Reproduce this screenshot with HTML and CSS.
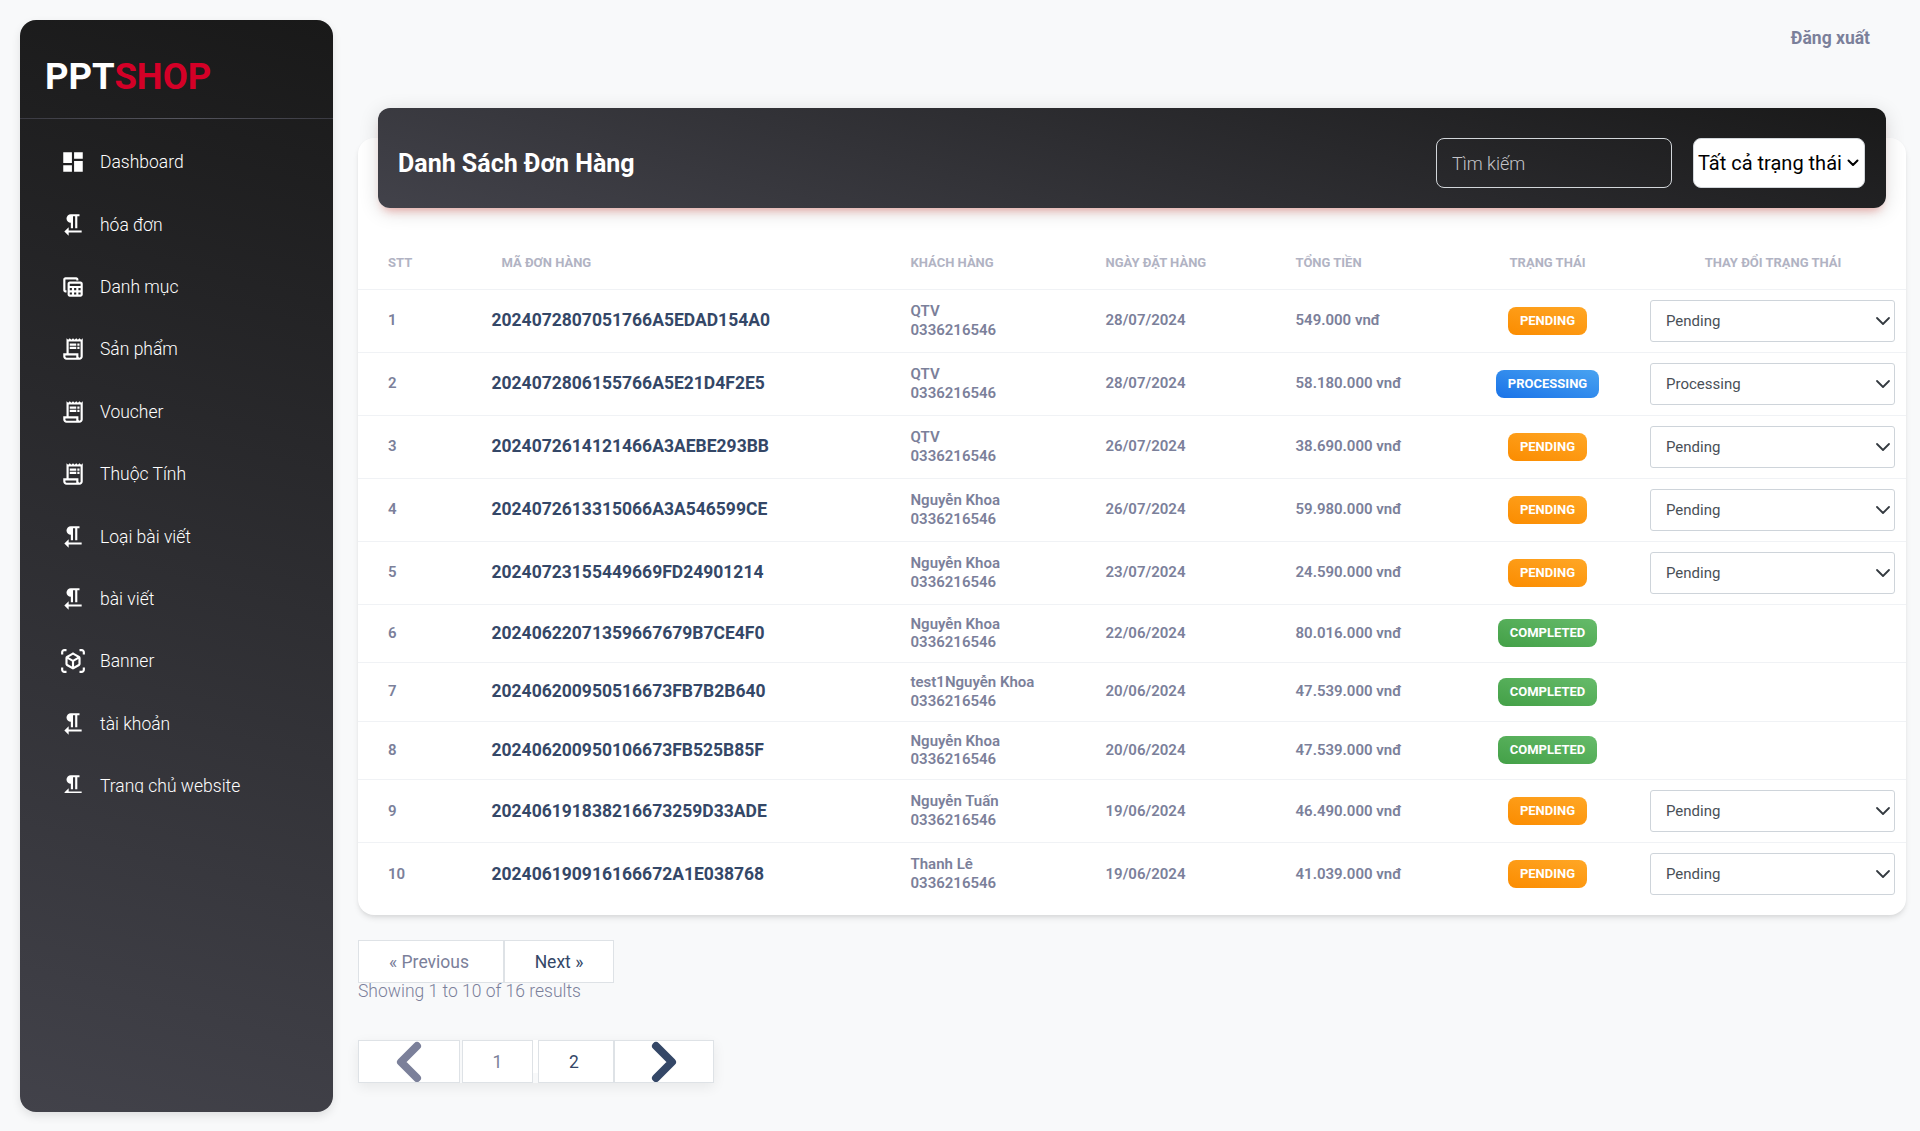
FILE: index.html
```html
<!DOCTYPE html>
<html lang="vi">
<head>
  <meta charset="UTF-8" />
  <title>Danh Sách Đơn Hàng</title>
  <link rel="stylesheet" href="styles.css">
</head>
<body>

  <svg class="icon-defs" width="0" height="0">
    <symbol id="i-dashboard" viewBox="0 0 24 24"><path d="M3 13h8V3H3v10zm0 8h8v-6H3v6zm10 0h8V11h-8v10zm0-18v6h8V3h-8z"/></symbol>
    <symbol id="i-rtl" viewBox="0 0 24 24"><path d="M10 10v5h2V4h2v11h2V4h2V2h-8C7.79 2 6 3.79 6 6s1.79 4 4 4zm-2 7v-3l-4 4 4 4v-3h12v-2H8z"/></symbol>
    <symbol id="i-table" viewBox="0 0 24 24"><path d="M19 7H9c-1.1 0-2 .9-2 2v10c0 1.1.9 2 2 2h10c1.1 0 2-.9 2-2V9c0-1.1-.9-2-2-2zm0 2v2H9V9h10zm-6 6v-2h2v2h-2zm2 2v2h-2v-2h2zm-4-2H9v-2h2v2zm6-2h2v2h-2v-2zm-8 4h2v2H9v-2zm8 2v-2h2v2h-2zM6 17H5c-1.1 0-2-.9-2-2V5c0-1.1.9-2 2-2h10c1.1 0 2 .9 2 2v1h-2V5H5v10h1v2z"/></symbol>
    <symbol id="i-receipt" viewBox="0 0 24 24"><path d="M19.5 3.5 18 2l-1.5 1.5L15 2l-1.5 1.5L12 2l-1.5 1.5L9 2 7.5 3.5 6 2v14H3v3c0 1.66 1.34 3 3 3h12c1.66 0 3-1.34 3-3V2l-1.5 1.5zM15 20H6c-.55 0-1-.45-1-1v-1h10v2zm4-1c0 .55-.45 1-1 1s-1-.45-1-1v-3H8V5h11v14z"/><path d="M9 7h6v2H9zm7 0h2v2h-2zM9 10h6v2H9zm7 0h2v2h-2z"/></symbol>
    <symbol id="i-ar" viewBox="0 0 24 24"><path d="M3 4c0-.55.45-1 1-1h2V1H4C2.34 1 1 2.34 1 4v2h2V4zm0 16v-2H1v2c0 1.66 1.34 3 3 3h2v-2H4c-.55 0-1-.45-1-1zM20 1h-2v2h2c.55 0 1 .45 1 1v2h2V4c0-1.66-1.34-3-3-3zm1 19c0 .55-.45 1-1 1h-2v2h2c1.66 0 3-1.34 3-3v-2h-2v2zm-2-5.13V9.13c0-.72-.38-1.38-1-1.73l-5-2.88c-.31-.18-.65-.27-1-.27s-.69.09-1 .27L6 7.39c-.62.36-1 1.02-1 1.74v5.74c0 .72.38 1.38 1 1.73l5 2.88c.31.18.65.27 1 .27s.69-.09 1-.27l5-2.88c.62-.35 1-1.01 1-1.73zm-8 2.3-4-2.3v-4.63l4 2.33v4.6zm1-6.33L8.04 8.53 12 6.25l3.96 2.28L12 10.84zm5 4.03-4 2.3v-4.6l4-2.33v4.63z"/></symbol>
  </svg>

  <aside class="sidebar">
    <a class="logo" href="#">PPT<span>SHOP</span></a>
    <hr class="divider">
    <nav class="menu">
      <a href="#"><svg><use href="#i-dashboard"/></svg>Dashboard</a>
      <a href="#"><svg><use href="#i-rtl"/></svg>hóa đơn</a>
      <a href="#"><svg><use href="#i-table"/></svg>Danh mục</a>
      <a href="#"><svg><use href="#i-receipt"/></svg>Sản phẩm</a>
      <a href="#"><svg><use href="#i-receipt"/></svg>Voucher</a>
      <a href="#"><svg><use href="#i-receipt"/></svg>Thuộc Tính</a>
      <a href="#"><svg><use href="#i-rtl"/></svg>Loại bài viết</a>
      <a href="#"><svg><use href="#i-rtl"/></svg>bài viết</a>
      <a href="#"><svg><use href="#i-ar"/></svg>Banner</a>
      <a href="#"><svg><use href="#i-rtl"/></svg>tài khoản</a>
      <a href="#"><svg><use href="#i-rtl"/></svg>Trang chủ website</a>
    </nav>
  </aside>

  <main class="main">
    <div class="topbar"><a class="logout" href="#">Đăng xuất</a></div>

    <section class="card">
      <div class="card-header">
        <h2>Danh Sách Đơn Hàng</h2>
        <input class="search" type="text" placeholder="Tìm kiếm">
        <select class="status-filter">
          <option>Tất cả trạng thái</option>
        </select>
      </div>

      <table class="orders">
        <colgroup>
          <col class="c-stt"><col class="c-code"><col class="c-customer"><col class="c-date"><col class="c-total"><col class="c-status"><col class="c-change">
        </colgroup>
        <thead>
          <tr>
            <th class="stt">STT</th>
            <th class="code-head">Mã đơn hàng</th>
            <th>Khách hàng</th>
            <th>Ngày đặt hàng</th>
            <th>Tổng tiền</th>
            <th class="center">Trạng thái</th>
            <th class="center">Thay đổi trạng thái</th>
          </tr>
        </thead>
        <tbody>
          <tr>
            <td class="stt">1</td>
            <td class="code">2024072807051766A5EDAD154A0</td>
            <td>QTV<br>0336216546</td>
            <td>28/07/2024</td>
            <td>549.000 vnđ</td>
            <td class="center"><span class="badge pending">Pending</span></td>
            <td><select class="change"><option>Pending</option></select></td>
          </tr>
          <tr>
            <td class="stt">2</td>
            <td class="code">2024072806155766A5E21D4F2E5</td>
            <td>QTV<br>0336216546</td>
            <td>28/07/2024</td>
            <td>58.180.000 vnđ</td>
            <td class="center"><span class="badge processing">Processing</span></td>
            <td><select class="change"><option>Processing</option></select></td>
          </tr>
          <tr>
            <td class="stt">3</td>
            <td class="code">2024072614121466A3AEBE293BB</td>
            <td>QTV<br>0336216546</td>
            <td>26/07/2024</td>
            <td>38.690.000 vnđ</td>
            <td class="center"><span class="badge pending">Pending</span></td>
            <td><select class="change"><option>Pending</option></select></td>
          </tr>
          <tr>
            <td class="stt">4</td>
            <td class="code">2024072613315066A3A546599CE</td>
            <td>Nguyễn Khoa<br>0336216546</td>
            <td>26/07/2024</td>
            <td>59.980.000 vnđ</td>
            <td class="center"><span class="badge pending">Pending</span></td>
            <td><select class="change"><option>Pending</option></select></td>
          </tr>
          <tr>
            <td class="stt">5</td>
            <td class="code">20240723155449669FD24901214</td>
            <td>Nguyễn Khoa<br>0336216546</td>
            <td>23/07/2024</td>
            <td>24.590.000 vnđ</td>
            <td class="center"><span class="badge pending">Pending</span></td>
            <td><select class="change"><option>Pending</option></select></td>
          </tr>
          <tr>
            <td class="stt">6</td>
            <td class="code">20240622071359667679B7CE4F0</td>
            <td>Nguyễn Khoa<br>0336216546</td>
            <td>22/06/2024</td>
            <td>80.016.000 vnđ</td>
            <td class="center"><span class="badge completed">Completed</span></td>
            <td></td>
          </tr>
          <tr>
            <td class="stt">7</td>
            <td class="code">202406200950516673FB7B2B640</td>
            <td>test1Nguyễn Khoa<br>0336216546</td>
            <td>20/06/2024</td>
            <td>47.539.000 vnđ</td>
            <td class="center"><span class="badge completed">Completed</span></td>
            <td></td>
          </tr>
          <tr>
            <td class="stt">8</td>
            <td class="code">202406200950106673FB525B85F</td>
            <td>Nguyễn Khoa<br>0336216546</td>
            <td>20/06/2024</td>
            <td>47.539.000 vnđ</td>
            <td class="center"><span class="badge completed">Completed</span></td>
            <td></td>
          </tr>
          <tr>
            <td class="stt">9</td>
            <td class="code">202406191838216673259D33ADE</td>
            <td>Nguyễn Tuấn<br>0336216546</td>
            <td>19/06/2024</td>
            <td>46.490.000 vnđ</td>
            <td class="center"><span class="badge pending">Pending</span></td>
            <td><select class="change"><option>Pending</option></select></td>
          </tr>
          <tr>
            <td class="stt">10</td>
            <td class="code">202406190916166672A1E038768</td>
            <td>Thanh Lê<br>0336216546</td>
            <td>19/06/2024</td>
            <td>41.039.000 vnđ</td>
            <td class="center"><span class="badge pending">Pending</span></td>
            <td><select class="change"><option>Pending</option></select></td>
          </tr>
        </tbody>
      </table>
    </section>

    <div class="simple-links">
      <a class="muted" href="#">&laquo; Previous</a>
      <a href="#">Next &raquo;</a>
    </div>
    <p class="showing">Showing 1 to 10 of 16 results</p>

    <div class="pager">
      <a class="page arrow prev muted" href="#">
        <svg width="28" height="44" viewBox="0 0 28 44"><path d="M22 6 6 22l16 16"/></svg>
      </a>
      <a class="page num first muted" href="#">1</a>
      <span class="page-gap"></span>
      <a class="page num second" href="#">2</a>
      <a class="page arrow" href="#">
        <svg width="28" height="44" viewBox="0 0 28 44"><path d="m6 6 16 16L6 38"/></svg>
      </a>
    </div>
  </main>

</body>
</html>
```

FILE: styles.css
```css
:root {
  --text-dark: #344767;
  --text-muted: #7b809a;
  --border: #dee2e6;
}

* {
  box-sizing: border-box;
}

body {
  margin: 0;
  min-height: 1131px;
  display: flex;
  align-items: flex-start;
  background-color: #f8f9fa;
  font-family: Roboto, sans-serif;
  color: var(--text-muted);
}

a {
  text-decoration: none;
  color: inherit;
}

.icon-defs {
  position: absolute;
}

/* sidebar */
.sidebar {
  flex: none;
  width: 313px;
  height: 1092px;
  margin: 20px 25px 0 20px;
  border-radius: 16px;
  background-image: linear-gradient(195deg, #191919, #42424a);
  box-shadow: 0 4px 10px rgba(0, 0, 0, 0.1);
  color: #fff;
}

.logo {
  display: block;
  height: 98px;
  padding: 35px 0 0 25px;
  font-size: 36.5px;
  line-height: 44px;
  font-weight: 700;
}

.logo span {
  color: #d40027;
}

.divider {
  height: 1px;
  margin: 0;
  border: 0;
  background-image: linear-gradient(90deg, #3a3a42, #55555e 50%, #3a3a42);
}

.menu {
  height: 662px;
  margin-top: 12px;
  overflow: hidden;
}

.menu a {
  display: flex;
  align-items: center;
  gap: 14px;
  height: 62.4px;
  padding-left: 40px;
  font-size: 17.5px;
  font-weight: 300;
}

.menu svg {
  flex: none;
  width: 26px;
  height: 26px;
  fill: #fff;
}

/* main column */
.main {
  width: 1548px;
}

.topbar {
  display: flex;
  justify-content: flex-end;
  height: 138px;
  padding: 27px 36px 0 0;
}

.logout {
  font-size: 17.5px;
  line-height: 22px;
  font-weight: 700;
}

.card {
  display: flow-root;
  padding-bottom: 10px;
  border-radius: 16px;
  background-color: #fff;
  box-shadow: 0 4px 6px -1px rgba(0, 0, 0, 0.1), 0 2px 4px -1px rgba(0, 0, 0, 0.06);
}

.card-header {
  display: flex;
  align-items: center;
  height: 100px;
  margin: -30px 20px 0;
  padding: 10px 21px 0 20px;
  border-radius: 12px;
  background-image: linear-gradient(195deg, #191919, #42424a);
  box-shadow: 0 4px 20px rgba(0, 0, 0, 0.14), 0 7px 10px -5px rgba(244, 67, 54, 0.4);
}

.card-header h2 {
  flex: 1;
  margin: 0;
  font-size: 25px;
  font-weight: 700;
  color: #fff;
}

.search {
  width: 236px;
  height: 50px;
  margin-right: 21px;
  padding: 0 15px;
  border: 1px solid #d2d6da;
  border-radius: 8px;
  background: transparent;
  font-family: Roboto, sans-serif;
  font-size: 18px;
  font-weight: 300;
  color: #fff;
}

.search::placeholder {
  color: #c4c4c8;
}

.status-filter {
  width: 172px;
  height: 50px;
  padding: 0 0 0 4px;
  border: 1px solid #d2d6da;
  border-radius: 8px;
  appearance: none;
  background: #fff url("data:image/svg+xml,%3csvg xmlns='http://www.w3.org/2000/svg' viewBox='0 0 12 8'%3e%3cpath fill='none' stroke='%23000' stroke-linecap='round' stroke-linejoin='round' stroke-width='2' d='m1.5 1.5 4.5 4.5 4.5-4.5'/%3e%3c/svg%3e") no-repeat right 5px center / 12px 8px;
  font-family: Roboto, sans-serif;
  font-size: 20px;
  color: #000;
}

/* orders table */
.orders {
  width: 100%;
  margin-top: 30px;
  border-collapse: collapse;
  table-layout: fixed;
}

.c-stt { width: 123.5px; }
.c-code { width: 419px; }
.c-customer { width: 195px; }
.c-date { width: 190px; }
.c-total { width: 169.5px; }
.c-status { width: 185px; }
.c-change { width: 266px; }

.orders th {
  height: 51px;
  padding: 0 10px 2px;
  text-align: left;
  font-size: 13px;
  font-weight: 700;
  text-transform: uppercase;
  color: #b1b3c3;
  border-bottom: 1px solid #f0f2f5;
}

.orders td {
  padding: 10px;
  font-size: 15px;
  line-height: 18.8px;
  font-weight: 600;
  border-bottom: 1px solid #f0f2f5;
}

.orders tbody tr:last-child td {
  border-bottom: 0;
}

.orders .stt {
  padding-left: 30px;
}

.orders .code-head {
  padding-left: 20px;
}

.orders .code {
  font-size: 17.5px;
  font-weight: 700;
  color: var(--text-dark);
}

.orders .center {
  text-align: center;
}

.badge {
  display: inline-block;
  padding: 5px 12px;
  border-radius: 8px;
  font-size: 13px;
  line-height: 18px;
  font-weight: 700;
  text-transform: uppercase;
  color: #fff;
  vertical-align: middle;
}

.pending { background-image: linear-gradient(195deg, #ffa726, #fb8c00); }
.processing { background-image: linear-gradient(195deg, #49a3f1, #1a73e8); }
.completed { background-image: linear-gradient(195deg, #66bb6a, #43a047); }

.change {
  display: block;
  width: 245px;
  height: 42px;
  padding: 0 32px 0 15px;
  border: 1px solid #ced4da;
  border-radius: 3px;
  appearance: none;
  background: #fff url("data:image/svg+xml,%3csvg xmlns='http://www.w3.org/2000/svg' viewBox='0 0 16 16'%3e%3cpath fill='none' stroke='%23343a40' stroke-linecap='round' stroke-linejoin='round' stroke-width='1.8' d='m2 5 6 6 6-6'/%3e%3c/svg%3e") no-repeat right 3px center / 16px 16px;
  font-family: Roboto, sans-serif;
  font-size: 15px;
  color: #495057;
}

/* pagination */
.simple-links {
  display: flex;
  margin-top: 25px;
}

.simple-links a {
  display: flex;
  align-items: center;
  justify-content: center;
  height: 43px;
  border: 1px solid var(--border);
  background-color: #fff;
  font-size: 17.5px;
  color: var(--text-dark);
}

.simple-links a:first-child {
  width: 146px;
  padding-right: 4px;
}

.simple-links a:last-child {
  width: 110px;
}

.simple-links a.muted {
  color: var(--text-muted);
}

.showing {
  margin: -4px 0 0;
  font-size: 17.5px;
  line-height: 24px;
  font-weight: 300;
}

.pager {
  display: flex;
  align-items: flex-start;
  margin-top: 37px;
  width: max-content;
  box-shadow: 0 4px 12px rgba(0, 0, 0, 0.07);
}

.page {
  display: flex;
  align-items: center;
  justify-content: center;
  height: 43px;
  border: 1px solid var(--border);
  background-color: #fff;
  font-size: 17.5px;
  color: var(--text-dark);
}

.page.muted {
  color: var(--text-muted);
}

.page.arrow {
  width: 100px;
  overflow: hidden;
}

.page.prev {
  width: 102px;
}

.page.first {
  width: 71px;
  margin-left: 2px;
}

.page.second {
  width: 76px;
  padding-right: 4px;
}

.page-gap {
  width: 5px;
  height: 33px;
  background-color: #fff;
}

.page svg {
  fill: none;
  stroke: currentColor;
  stroke-width: 8;
  stroke-linecap: round;
  stroke-linejoin: round;
}
```
